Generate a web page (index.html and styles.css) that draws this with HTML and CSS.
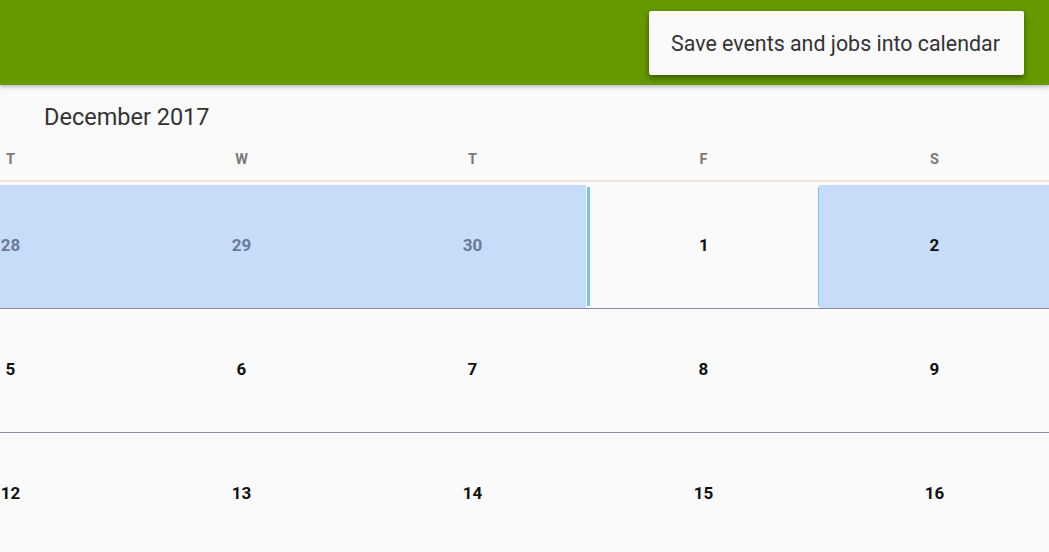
FILE: index.html
```html
<!DOCTYPE html>
<html lang="en">
<head>
  <meta charset="UTF-8">
  <title>Calendar</title>
  <link rel="stylesheet" href="styles.css">
</head>
<body>

<div class="actionbar"></div>

<div class="popup-menu">
  <div class="menu-item">Save events and jobs into calendar</div>
</div>

<div class="calendar">
  <div class="month-title">December 2017</div>

  <div class="weekdays">
    <div>T</div>
    <div>W</div>
    <div>T</div>
    <div>F</div>
    <div>S</div>
  </div>

  <div class="week highlighted">
    <div class="day other">28</div>
    <div class="day other">29</div>
    <div class="day other">30</div>
    <div class="day selected"><span class="mark">1</span></div>
    <div class="day">2</div>
  </div>

  <div class="week">
    <div class="day">5</div>
    <div class="day">6</div>
    <div class="day">7</div>
    <div class="day">8</div>
    <div class="day">9</div>
  </div>

  <div class="week">
    <div class="day">12</div>
    <div class="day">13</div>
    <div class="day">14</div>
    <div class="day">15</div>
    <div class="day">16</div>
  </div>
</div>

</body>
</html>
```

FILE: styles.css
```css
body {
  margin: 0;
  padding: 0;
  width: 1049px;
  height: 552px;
  overflow: hidden;
  background-color: #fafafa;
  font-family: Roboto, "Liberation Sans", sans-serif;
}

.actionbar {
  position: relative;
  z-index: 2;
  height: 85px;
  background-color: #669900;
  box-shadow: 0 2px 4px rgba(0, 0, 0, 0.25);
}

/* overflow menu lies over the action bar */
.popup-menu {
  position: absolute;
  top: 11px;
  right: 25px;
  z-index: 5;
  width: 375px;
  height: 64px;
  background-color: #fafafa;
  box-shadow: 0 3px 6px rgba(0, 0, 0, 0.45);
  border-radius: 2px;
  display: flex;
  align-items: center;
}

.menu-item {
  padding-left: 22px;
  font-size: 21.4px;
  color: #333333;
}

.calendar {
  overflow: hidden;
}

.month-title {
  padding: 18px 0 0 44px;
  height: 31px;
  font-size: 23.5px;
  color: #333333;
}

.weekdays {
  display: grid;
  grid-template-columns: repeat(5, 231px);
  margin-left: -105px;
  box-sizing: border-box;
  height: 48px;
  padding-top: 4px;
  align-items: center;
  font-size: 14.5px;
  font-weight: bold;
  color: #7a7a7a;
  text-align: center;
  border-bottom: 2px solid #ebe5df;
  margin-bottom: 3px;
}

.week {
  display: grid;
  grid-template-columns: repeat(5, 231px);
  margin-left: -105px;
  box-sizing: border-box;
  height: 124px;
  border-bottom: 1px solid #8c89a2;
}

.day {
  display: flex;
  align-items: center;
  justify-content: center;
  padding-bottom: 3px;
  font-size: 17px;
  font-weight: bold;
  color: #111111;
}

.week.highlighted .day {
  background-color: #c7dcf9;
}

.day.other {
  color: #6b7a98;
}

.week.highlighted .day.selected {
  background-color: #fafafa;
  padding: 2px 0 2px;
  margin-left: -2px;
  margin-right: -2px;
  align-items: stretch;
}

.mark {
  flex: 1;
  display: flex;
  align-items: center;
  justify-content: center;
  padding-bottom: 3px;
  border-left: 3px solid #74c7e8;
  border-right: 3px solid #74c7e8;
  margin-left: 1px;
}
```
